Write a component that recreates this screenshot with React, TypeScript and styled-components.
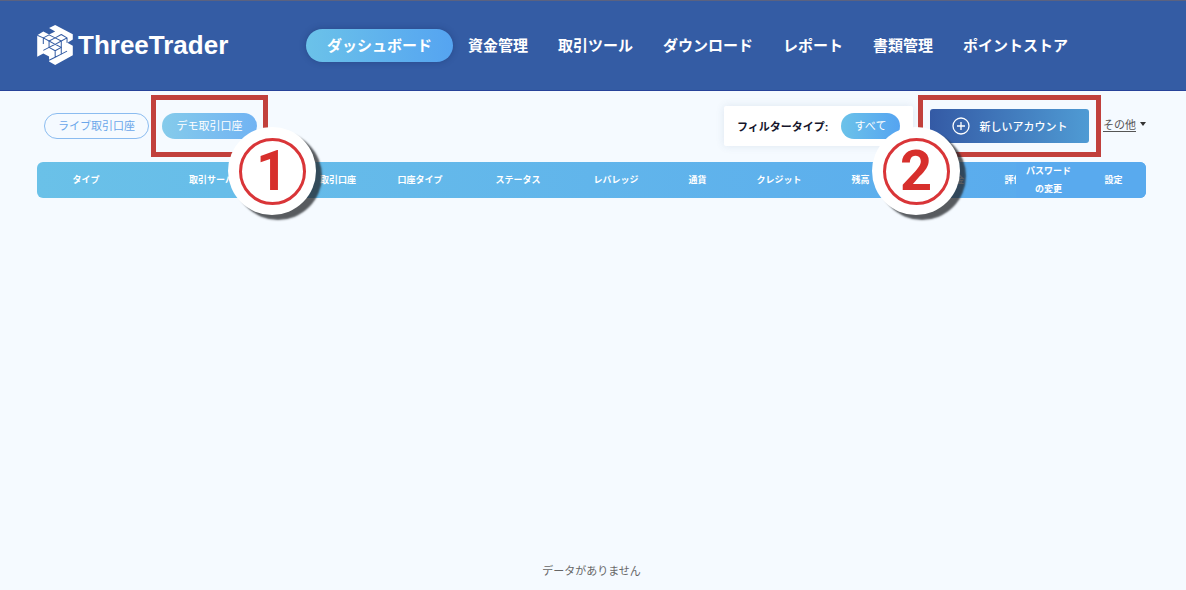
import React from "react";
import styled, { createGlobalStyle, css } from "styled-components";

const GlobalStyle = createGlobalStyle`
  * { box-sizing: border-box; }
  body {
    margin: 0;
    background: #f5faff;
    color: #15152b;
    font-family: "Liberation Sans", "Noto Sans CJK JP", sans-serif;
    font-size: 11px;
  }
  button, select { font: inherit; }
`;

const skyGradient = "linear-gradient(90deg, #6bc2e9, #55a4f1)";

const Page = styled.div`
  display: flex;
  flex-direction: column;
  min-height: 100vh;
`;

const Header = styled.header`
  display: flex;
  align-items: center;
  gap: 76px;
  height: 91px;
  padding: 0 37px 1px;
  background: #345ca4;
  border-top: 1px solid #5b6280;
  border-bottom: 1px solid #27439a;
`;

const Brand = styled.a`
  display: flex;
  align-items: center;
  gap: 5px;
  width: 193px;
  flex: none;
  color: #fff;
  font-size: 26px;
  line-height: 40px;
  font-weight: 700;
  font-family: "Liberation Sans", sans-serif;
  text-decoration: none;
`;

const Nav = styled.nav`
  display: flex;
  align-items: center;
  white-space: nowrap;
`;

const NavLink = styled.a<{ $active?: boolean }>`
  padding: 0 15px;
  color: #fff;
  font-size: 15px;
  line-height: 33px;
  font-weight: 700;
  text-decoration: none;
  ${({ $active }) =>
    $active &&
    css`
      padding: 0 21px;
      border-radius: 17px;
      background: ${skyGradient};
      box-shadow: 0 0 6px rgba(20, 40, 90, 0.35);
    `}
`;

const Main = styled.main`
  display: flex;
  flex: 1;
  flex-direction: column;
  padding: 16px 40px 10px 37px;
`;

const Toolbar = styled.div`
  display: flex;
  align-items: center;
  height: 38px;
  padding-left: 7px;
  margin-bottom: 17px;
`;

const Tabs = styled.div`
  display: flex;
  gap: 13px;
  margin-right: auto;
`;

const Marked = styled.div`
  position: relative;
  display: flex;
`;

const Pill = styled.button<{ $tone: "outline" | "soft" | "solid"; $width: number }>`
  width: ${({ $width }) => $width}px;
  height: 26px;
  padding: 0;
  border: 1px solid #8bbcf0;
  border-radius: 13px;
  background: transparent;
  color: #6aa6ea;
  line-height: 24px;
  white-space: nowrap;
  ${({ $tone }) =>
    $tone !== "outline" &&
    css`
      border-color: transparent;
      color: #fff;
      background: ${$tone === "soft" ? "linear-gradient(90deg, #85cbeb, #71b3f3)" : skyGradient} border-box;
    `}
`;

const Filter = styled.div`
  display: flex;
  align-items: center;
  justify-content: space-between;
  width: 189px;
  height: 40px;
  padding: 0 13px;
  margin-right: 17px;
  border-radius: 2px;
  background: #fff;
  box-shadow: 0 0 8px rgba(60, 90, 130, 0.12);
`;

const FilterLabel = styled.span`
  font-weight: 700;
  white-space: nowrap;
`;

const NewAccount = styled.button`
  display: flex;
  align-items: center;
  justify-content: center;
  gap: 10px;
  width: 159px;
  height: 34px;
  padding: 0;
  border: 0;
  border-radius: 3px;
  background: linear-gradient(90deg, #345aa5, #4f9bd4);
  color: #fff;
  font-weight: 500;
  white-space: nowrap;
`;

const More = styled.button`
  display: flex;
  align-items: center;
  gap: 4px;
  padding: 0 0 4px;
  margin-left: 14px;
  border: 0;
  background: none;
  color: #555;
  white-space: nowrap;
`;

const MoreText = styled.span`
  text-decoration: underline;
  text-underline-offset: 2px;
`;

const Caret = styled.span`
  border: 3px solid transparent;
  border-top: 4px solid #333;
  border-bottom: 0;
`;

const Frame = styled.span`
  position: absolute;
  inset: -18px -11px;
  border: 5px solid #c1403c;
  pointer-events: none;
`;

const WideFrame = styled(Frame)`
  inset: -14px -12px;
`;

const Badge = styled.span<{ $side: "left" | "right" }>`
  position: absolute;
  z-index: 2;
  ${({ $side }) => ($side === "left" ? "top: 18px; left: -58px;" : "top: 14px; right: -59px;")}
  display: grid;
  place-items: center;
  width: 88px;
  height: 88px;
  border-radius: 50%;
  background: #fff;
  box-shadow: 6px 5px 2px rgba(35, 38, 42, 0.75);
  pointer-events: none;
`;

const Ring = styled.span`
  display: grid;
  place-items: center;
  width: 67px;
  height: 67px;
  border: 3px solid #d93538;
  border-radius: 50%;
  color: #d72f2c;
  font-family: Roboto, "Liberation Sans", sans-serif;
  font-size: 56px;
  line-height: 60px;
  font-weight: 700;
`;

const TableScroll = styled.div`
  overflow-x: auto;
  scrollbar-width: none;
  border-radius: 6px;
  background: linear-gradient(90deg, #6ac1e8, #58a9ee);
`;

const Table = styled.table`
  width: 100%;
  min-width: 1156px;
  table-layout: fixed;
  border-collapse: separate;
  border-spacing: 0;
`;

const HeadCell = styled.th<{ $width: number; $pin?: number }>`
  width: ${({ $width }) => $width}px;
  height: 36px;
  padding: 0;
  color: #fff;
  font-size: 9px;
  line-height: 18px;
  font-weight: 700;
  white-space: nowrap;
  ${({ $pin }) =>
    $pin !== undefined &&
    css`
      position: sticky;
      right: ${$pin}px;
      z-index: 1;
      background: #59aaee;
    `}
`;

const Empty = styled.p`
  margin: auto auto 0;
  color: #666;
  line-height: 18px;
`;

type Column = { label: string; width: number; pin?: number };

const columns: Column[] = [
  { label: "タイプ", width: 98 },
  { label: "取引サーバー", width: 162 },
  { label: "取引口座", width: 82 },
  { label: "口座タイプ", width: 82 },
  { label: "ステータス", width: 114 },
  { label: "レバレッジ", width: 82 },
  { label: "通貨", width: 81 },
  { label: "クレジット", width: 82 },
  { label: "残高", width: 81 },
  { label: "有効証拠金", width: 81 },
  { label: "評価損益", width: 81 },
  { label: "パスワード\nの変更", width: 65, pin: 65 },
  { label: "設定", width: 65, pin: 0 },
];

const links = ["ダッシュボード", "資金管理", "取引ツール", "ダウンロード", "レポート", "書類管理", "ポイントストア"];

const Logo = () => (
  <svg width="36" height="40" viewBox="0 0 105 118" aria-hidden="true">
    <path
      fill="#fff"
      d="M0 30 18 19 35 28 53 19 35 9 53 0 105 27V43L89 52 105 61V89L53 118 35 108V93L18 84 0 94Z"
    />
    <g fill="none" stroke="#345ca4" strokeWidth="3" strokeLinejoin="round">
      <path d="M0 30 18 38 35 29 53 38 35 47 18 38V56" />
      <path d="M53 38 71 28 88 38 71 47 53 38M88 38V52M71 47V86M35 47V66L18 75" />
      <path d="M35 47 53 57 71 47M53 57 35 66 53 76 71 66 53 57M53 76V95L35 104M53 95 71 86 88 77" />
    </g>
  </svg>
);

const Plus = () => (
  <svg width="18" height="18" viewBox="0 0 18 18" fill="none" stroke="#fff" aria-hidden="true">
    <circle cx="9" cy="9" r="8" strokeWidth="1.3" />
    <path d="M9 5v8M5 9h8" strokeWidth="1.3" />
  </svg>
);

export default function App() {
  return (
    <Page>
      <GlobalStyle />
      <Header>
        <Brand href="#">
          <Logo />
          ThreeTrader
        </Brand>
        <Nav>
          {links.map((label, i) => (
            <NavLink key={label} href="#" $active={i === 0}>
              {label}
            </NavLink>
          ))}
        </Nav>
      </Header>
      <Main>
        <Toolbar>
          <Tabs>
            <Pill $tone="outline" $width={105}>ライブ取引口座</Pill>
            <Marked>
              <Pill $tone="soft" $width={95}>デモ取引口座</Pill>
              <Frame />
              <Badge $side="right">
                <Ring>1</Ring>
              </Badge>
            </Marked>
          </Tabs>
          <Filter>
            <FilterLabel id="filter-type">フィルタータイプ:</FilterLabel>
            <Pill $tone="solid" $width={59} aria-describedby="filter-type">すべて</Pill>
          </Filter>
          <Marked>
            <NewAccount>
              <Plus />
              新しいアカウント
            </NewAccount>
            <WideFrame />
            <Badge $side="left">
              <Ring>2</Ring>
            </Badge>
          </Marked>
          <More>
            <MoreText>その他</MoreText>
            <Caret />
          </More>
        </Toolbar>
        <TableScroll>
          <Table>
            <thead>
              <tr>
                {columns.map(({ label, width, pin }) => (
                  <HeadCell key={label} scope="col" $width={width} $pin={pin}>
                    {label.split("\n").map((line, i) => (
                      <React.Fragment key={line}>
                        {i > 0 && <br />}
                        {line}
                      </React.Fragment>
                    ))}
                  </HeadCell>
                ))}
              </tr>
            </thead>
          </Table>
        </TableScroll>
        <Empty>データがありません</Empty>
      </Main>
    </Page>
  );
}
